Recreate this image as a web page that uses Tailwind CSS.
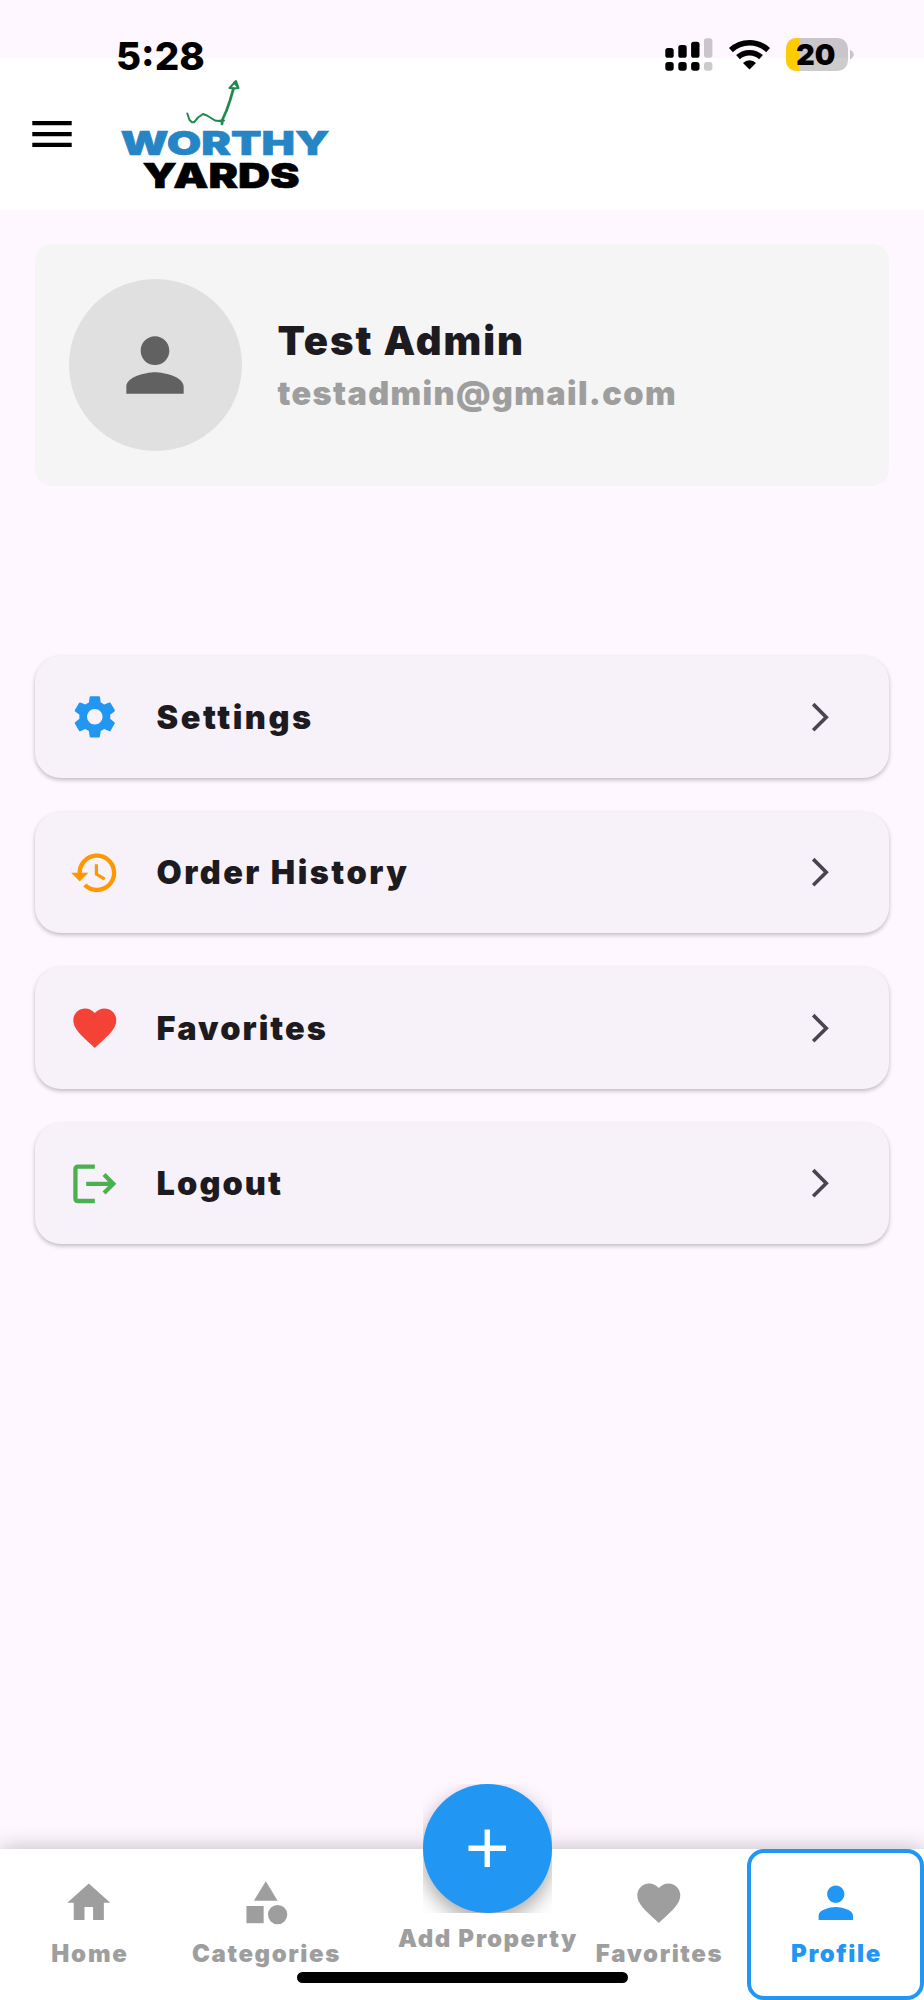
<!DOCTYPE html>
<html lang="en">
<head>
<meta charset="utf-8">
<title>Worthy Yards – Profile</title>
<script src="https://cdn.jsdelivr.net/npm/@tailwindcss/browser@4"></script>
</head>
<body class="bg-[#fef7ff] font-['Inter',sans-serif]">
<div class="relative flex h-[2000px] w-[924px] flex-col overflow-hidden bg-[#fef7ff] text-[#1d1b20]">

  <!-- Status bar -->
  <div class="absolute inset-x-0 top-0 z-10 h-20 text-black">
    <span class="absolute left-[116px] top-[31.500px] text-[38.500px]/[48px] font-extrabold">5:28</span>
    <svg class="absolute left-[665px] top-[38px]" width="190" height="34" viewBox="0 0 190 34">
      <g fill="#000">
        <rect x="0.3" y="10" width="8.4" height="9.8" rx="2.6"/><rect x="13.3" y="7" width="8.4" height="12.8" rx="2.6"/><rect x="26.1" y="3.7" width="8.4" height="16.1" rx="2.6"/>
        <rect x="0.3" y="24" width="8.4" height="8.8" rx="2.8"/><rect x="13.3" y="24" width="8.4" height="8.8" rx="2.8"/><rect x="26.1" y="24" width="8.4" height="8.8" rx="2.8"/>
      </g>
      <rect x="39" y="0.2" width="8.4" height="19.6" rx="2.8" fill="#cac4cb"/><rect x="39" y="24" width="8.4" height="8.8" rx="2.8" fill="#cbcbcb"/>
      <g fill="none" stroke="#000" stroke-width="5.6">
        <path d="M65.9 12.1 A27.3 27.3 0 0 1 103.1 12.1"/><path d="M73 19.2 A17.2 17.2 0 0 1 96 19.2"/>
      </g>
      <path d="M84.5 31.4 78 24.9 A9.3 9.3 0 0 1 91 24.9Z" fill="#000"/>
      <clipPath id="bat"><rect x="121" y="0" width="62" height="33" rx="10.5"/></clipPath>
      <g clip-path="url(#bat)"><rect x="121" y="0" width="62" height="20" fill="#cac4cb"/><rect x="121" y="20" width="62" height="14" fill="#cccccc"/><rect x="121" y="0" width="13.2" height="34" fill="#ffcc00"/></g>
      <path d="M185 11.8c5 2 5 7.600 0 9.600z" fill="#cac4cb"/>
    </svg>
    <span class="absolute left-[796px] top-[36px] text-[29px]/[37px] font-black">20</span>
  </div>

  <!-- App bar -->
  <header class="mt-[58px] flex h-[152px] shrink-0 items-center bg-white pl-8">
    <svg width="40" height="26" viewBox="0 0 40 26"><path d="M.3 0h39.400v4.300H.3zM.3 10.900h39.400v4.300H.3zM.3 21.700h39.400v4.300H.3z"/></svg>
    <svg class="ml-[38px]" width="230" height="130" viewBox="0 0 230 130" font-family="Inter, sans-serif" font-weight="900">
      <g fill="none" stroke="#1f8a4c" stroke-linecap="round" stroke-linejoin="round">
        <path stroke-width="2" d="M77.300 44.500l2.200 6.500 2.500 2.300h2l4-4.800 5-3.500 4 1.500 8 5 6 .8"/>
        <path stroke-width="2.700" d="M112 55l.5-4.500 4-9 3.500-10 3.500-12"/>
        <path stroke-width="2" d="M110 51.500h4M119.500 19l6.500-7 2.500 7-4.500.5zM124 13.500l3.500 4"/>
      </g>
      <text x="10.500" y="86.200" font-size="33" fill="#2685c5" stroke="#2685c5" stroke-width=".6" textLength="209" lengthAdjust="spacingAndGlyphs">WORTHY</text>
      <text x="32.500" y="119.200" font-size="34.500" fill="#000" stroke="#000" stroke-width=".6" textLength="157" lengthAdjust="spacingAndGlyphs">YARDS</text>
    </svg>
  </header>

  <main class="flex flex-1 flex-col pl-[34.500px] pr-[34.800px] pt-[34px]">
    <section class="flex h-[242px] items-center rounded-[17px] bg-[#f5f5f5] pl-[34.500px]">
      <div class="flex size-[172.500px] items-center justify-center rounded-full bg-[#e0e0e0]">
        <svg class="size-[86px]" viewBox="0 0 24 24" fill="#616161"><path d="M12 12c2.210 0 4-1.790 4-4s-1.790-4-4-4-4 1.790-4 4 1.790 4 4 4zm0 2c-2.670 0-8 1.340-8 4v2h16v-2c0-2.660-5.330-4-8-4z"/></svg>
      </div>
      <div class="ml-[36px] mt-[4px] whitespace-nowrap">
        <h1 class="text-[40px]/[52px] font-black tracking-[2px]">Test Admin</h1>
        <p class="text-[32.500px]/[53px] font-black tracking-[1.350px] text-[#9e9e9e]">testadmin@gmail.com</p>
      </div>
    </section>

    <nav class="mt-[170.200px] flex flex-col gap-[34px] text-[32.500px]/[40px] font-black">
      <a class="flex h-[121.500px] items-center rounded-[26px] bg-[#f7f2fa] pl-[34.500px] pr-[52px] shadow-[0_2px_4px_rgba(0,0,0,0.25)]">
        <svg class="size-[51.600px]" viewBox="0 0 24 24" fill="#2196f3"><path d="M19.140 12.940c.04-.3.06-.61.06-.94 0-.32-.02-.64-.07-.94l2.030-1.580c.18-.14.23-.41.12-.61l-1.920-3.320c-.12-.22-.37-.29-.59-.22l-2.390.96c-.5-.38-1.030-.7-1.620-.94l-.36-2.540c-.04-.24-.24-.41-.48-.41h-3.840c-.24 0-.43.17-.47.41l-.36 2.540c-.59.24-1.130.57-1.620.94l-2.390-.96c-.22-.08-.47 0-.59.22L2.740 8.870c-.12.21-.08.47.12.61l2.030 1.580c-.05.3-.09.63-.09.94s.02.64.07.94l-2.030 1.580c-.18.14-.23.41-.12.61l1.920 3.320c.12.22.37.29.59.22l2.390-.96c.5.38 1.030.7 1.620.94l.36 2.540c.05.24.24.41.48.41h3.840c.24 0 .44-.17.47-.41l.36-2.540c.59-.24 1.130-.56 1.620-.94l2.390.96c.22.08.47 0 .59-.22l1.920-3.320c.12-.22.07-.47-.12-.61l-2.010-1.580zM12 15.600c-1.980 0-3.600-1.620-3.600-3.600s1.620-3.600 3.600-3.600 3.600 1.620 3.600 3.600-1.620 3.600-3.600 3.600z"/></svg>
        <span class="ml-[36px] flex-1 pt-[1.500px] tracking-[2.550px]">Settings</span>
        <svg class="size-[34.400px]" viewBox="0 0 24 24" fill="#49454f"><path d="M6.230 20.230 8 22l10-10L8 2 6.230 3.770 14.460 12z"/></svg>
      </a>
      <a class="flex h-[121.500px] items-center rounded-[26px] bg-[#f7f2fa] pl-[34.500px] pr-[52px] shadow-[0_2px_4px_rgba(0,0,0,0.25)]">
        <svg class="size-[51.600px]" viewBox="0 0 24 24" fill="#ff9800"><path d="M13 3c-4.970 0-9 4.030-9 9H1l3.890 3.890.07.14L9 12H6c0-3.870 3.130-7 7-7s7 3.130 7 7-3.130 7-7 7c-1.930 0-3.680-.79-4.940-2.060l-1.420 1.420C8.270 19.990 10.510 21 13 21c4.970 0 9-4.030 9-9s-4.030-9-9-9zm-1 5v5l4.280 2.540.72-1.210-3.500-2.080V8H12z"/></svg>
        <span class="ml-[36px] flex-1 pt-[1.500px] tracking-[2.450px]">Order History</span>
        <svg class="size-[34.400px]" viewBox="0 0 24 24" fill="#49454f"><path d="M6.230 20.230 8 22l10-10L8 2 6.230 3.770 14.460 12z"/></svg>
      </a>
      <a class="flex h-[121.500px] items-center rounded-[26px] bg-[#f7f2fa] pl-[34.500px] pr-[52px] shadow-[0_2px_4px_rgba(0,0,0,0.25)]">
        <svg class="size-[51.600px]" viewBox="0 0 24 24" fill="#f44336"><path d="M12 21.350l-1.450-1.320C5.400 15.360 2 12.280 2 8.500 2 5.420 4.420 3 7.500 3c1.740 0 3.410.81 4.500 2.090C13.090 3.810 14.760 3 16.500 3 19.580 3 22 5.420 22 8.500c0 3.780-3.400 6.860-8.550 11.540L12 21.350z"/></svg>
        <span class="ml-[36px] flex-1 pt-[1.500px] tracking-[2.050px]">Favorites</span>
        <svg class="size-[34.400px]" viewBox="0 0 24 24" fill="#49454f"><path d="M6.230 20.230 8 22l10-10L8 2 6.230 3.770 14.460 12z"/></svg>
      </a>
      <a class="flex h-[121.500px] items-center rounded-[26px] bg-[#f7f2fa] pl-[34.500px] pr-[52px] shadow-[0_2px_4px_rgba(0,0,0,0.25)]">
        <svg class="size-[51.600px]" viewBox="0 0 24 24" fill="#4caf50"><path d="M12 3H4a2 2 0 0 0-2 2v14a2 2 0 0 0 2 2h8v-2H4V5h8zM17 7l-1.410 1.410L18.170 11H8v2h10.170l-2.580 2.590L17 17l5-5z"/></svg>
        <span class="ml-[36px] flex-1 pt-[1.500px] tracking-[2.050px]">Logout</span>
        <svg class="size-[34.400px]" viewBox="0 0 24 24" fill="#49454f"><path d="M6.230 20.230 8 22l10-10L8 2 6.230 3.770 14.460 12z"/></svg>
      </a>
    </nav>
  </main>

  <!-- Bottom navigation -->
  <footer class="relative flex h-[151.500px] shrink-0 bg-white text-[24px]/[30px] font-black tracking-[1.600px] text-[#9e9e9e] shadow-[0_0_21px_rgba(0,0,0,0.25)]">
    <a class="flex w-[177px] flex-col items-center pt-[28px]">
      <svg class="size-[51.600px]" viewBox="0 0 24 24" fill="currentColor"><path d="M10 20v-6h4v6h5v-8h3L12 3 2 12h3v8z"/></svg>
      <span class="mt-[11px] pl-[3px] tracking-[1.800px]">Home</span>
    </a>
    <a class="flex w-[177px] flex-col items-center pt-[28px]">
      <svg class="size-[51.600px]" viewBox="0 0 24 24" fill="currentColor"><path d="M12 2l-5.500 9h11z"/><circle cx="17.500" cy="17.500" r="4.500"/><path d="M3 13.500h8v8H3z"/></svg>
      <span class="mt-[11px] pl-[2px]">Categories</span>
    </a>
    <a class="ml-[44px] flex w-[179px] flex-col items-center whitespace-nowrap">
      <span class="-mt-[64.700px] flex size-[129.500px] shrink-0 overflow-hidden">
        <span class="flex size-full items-center justify-center rounded-full bg-[#2196f3] shadow-[0_8px_20px_rgba(0,0,0,0.35)]">
          <svg class="size-[64.500px]" viewBox="0 0 24 24" fill="#fff"><path d="M19 13h-6v6h-2v-6H5v-2h6V5h2v6h6z"/></svg>
        </span>
      </span>
      <span class="mt-[10.500px] pl-[1px]">Add Property</span>
    </a>
    <a class="-ml-[7px] flex w-[177px] flex-col items-center pt-[28px]">
      <svg class="size-[51.600px]" viewBox="0 0 24 24" fill="currentColor"><path d="M12 21.350l-1.450-1.320C5.400 15.360 2 12.280 2 8.500 2 5.420 4.420 3 7.500 3c1.740 0 3.410.81 4.500 2.090C13.090 3.810 14.760 3 16.500 3 19.580 3 22 5.420 22 8.500c0 3.780-3.400 6.860-8.550 11.540L12 21.350z"/></svg>
      <span class="mt-[11px] pl-[2px]">Favorites</span>
    </a>
    <a class="flex w-[177px] flex-col items-center rounded-[17px] border-[4px] border-[#2196f3] pt-[24px] text-[#2196f3]">
      <svg class="size-[51.600px]" viewBox="0 0 24 24" fill="currentColor"><path d="M12 12c2.210 0 4-1.790 4-4s-1.790-4-4-4-4 1.790-4 4 1.790 4 4 4zm0 2c-2.670 0-8 1.340-8 4v2h16v-2c0-2.660-5.330-4-8-4z"/></svg>
      <span class="mt-[11px] pl-[2px]">Profile</span>
    </a>
    <div class="absolute bottom-[17.500px] left-[297px] h-[11px] w-[330.500px] rounded-full bg-black"></div>
  </footer>
</div>
</body>
</html>
